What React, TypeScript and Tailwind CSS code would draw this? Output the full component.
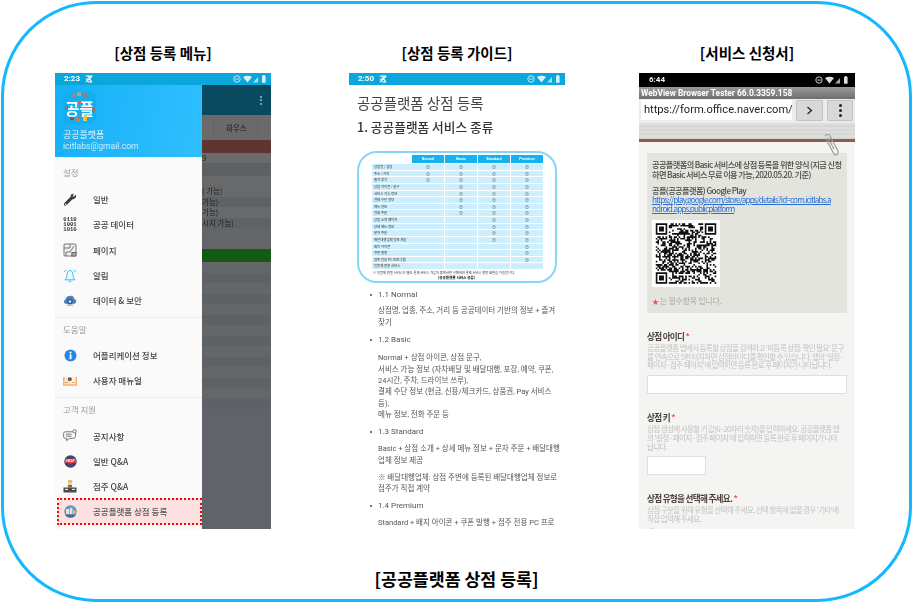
import React from "react";

const KR = "font-['Noto_Sans_CJK_KR','Noto_Sans',sans-serif]";
const RB = "font-['Roboto','Noto_Sans_CJK_KR',sans-serif]";

function StatusIcons({ color = "#fff" }: { color?: string }) {
  return (
    <svg width="36" height="10" viewBox="0 0 36 10" fill="none">
      <circle cx="5" cy="5" r="3.2" stroke={color} strokeWidth="0.9" />
      <rect x="3.2" y="4.6" width="3.6" height="0.9" fill={color} />
      <path d="M11 3 Q15.5 0.5 20 3 L15.5 8.5 Z" fill={color} />
      <path d="M21 8.5 L26 3 V8.5 Z" fill={color} opacity="0.75" />
      <rect x="30" y="1.8" width="3.6" height="7" rx="0.6" fill={color} />
      <rect x="31" y="1" width="1.6" height="1" fill={color} />
    </svg>
  );
}

function CrossIcon() {
  return (
    <svg width="8" height="8" viewBox="0 0 8 8" fill="none" stroke="#fff" strokeWidth="1.2">
      <path d="M0.8 1 H7.2 M7.2 1 L1 7 M3 1 L6.5 7 H3 M0.8 4 L3 4" />
    </svg>
  );
}

const WrenchIcon = () => (
  <svg width="14" height="14" viewBox="0 0 14 14">
    <path d="M13 1.6 L10.6 3.8 L9.6 3.2 L10.8 0.8 C9 0.4 7.4 1.6 7.6 3.8 L1.2 10.2 C0.2 11.4 1.4 13.4 3 12.6 L9.6 6.2 C11.8 6.6 13.6 4.2 13 1.6 Z" fill="#3c3c3c" />
    <circle cx="2.6" cy="11.2" r="0.8" fill="#fff" />
  </svg>
);
const BinaryIcon = () => (
  <div className="font-['Liberation_Mono',monospace] text-[5.6px] leading-[5.2px] font-bold text-[#333] text-center">
    0110<br />1001<br />1010
  </div>
);
const PageIcon = () => (
  <svg width="14" height="14" viewBox="0 0 14 14" fill="none" stroke="#666" strokeWidth="0.9">
    <rect x="1" y="1" width="12" height="12" rx="1" fill="#f2f2f2" />
    <path d="M1 5 H7 V1 M3 13 V9 H7 M7 9 L11 3 M9 13 V9.5 H13" />
    <rect x="9" y="9.5" width="4" height="3.5" fill="#aaa" />
  </svg>
);
const BellIcon = () => (
  <svg width="14" height="15" viewBox="0 0 14 15" fill="none" stroke="#2fc4f7" strokeWidth="1">
    <path d="M7 2.5 C4.5 2.5 4.2 5 4 7.5 C3.9 9.5 3 10.5 2 11.8 H12 C11 10.5 10.1 9.5 10 7.5 C9.8 5 9.5 2.5 7 2.5 Z" fill="#e8fbff" />
    <path d="M5.5 12.6 C6 14 8 14 8.5 12.6 M1.2 4 L3 1.8 M12.8 4 L11 1.8" />
  </svg>
);
const CloudIcon = () => (
  <svg width="15" height="13" viewBox="0 0 15 13">
    <path d="M3.4 10 C0.6 10 0 6 2.8 5.4 C3 2.8 5.4 1.2 7.6 1.8 C9.4 0.6 12 2.2 11.8 4.6 C14.8 5 15 10 12 10 Z" fill="#4a82c2" />
    <circle cx="7.5" cy="7.6" r="3.2" fill="#37608f" />
    <circle cx="7.5" cy="7.6" r="1.4" fill="#d6e2ee" />
    <path d="M4 11.5 H11" stroke="#7c9cc0" strokeWidth="1" />
  </svg>
);
const InfoIcon = () => (
  <svg width="13" height="13" viewBox="0 0 13 13">
    <circle cx="6.5" cy="6.5" r="6" fill="#2a86e4" />
    <rect x="5.6" y="5.4" width="1.9" height="4.8" fill="#fff" />
    <circle cx="6.5" cy="3.6" r="1.1" fill="#fff" />
  </svg>
);
const BookIcon = () => (
  <svg width="14" height="10" viewBox="0 0 14 10">
    <rect x="0.2" y="1" width="13.6" height="8.6" fill="#f3a050" />
    <path d="M1.4 0.8 H6.8 V8.4 H1.4 Z" fill="#fbe7c4" />
    <path d="M7.2 0.8 H12.6 V8.4 H7.2 Z" fill="#fff3dc" />
    <rect x="5" y="1.6" width="3.6" height="3.2" fill="#555" />
    <rect x="2" y="6" width="3" height="0.7" fill="#e27f46" />
    <rect x="9" y="6" width="3" height="0.7" fill="#e27f46" />
  </svg>
);
const ChatIcon = () => (
  <svg width="14" height="13" viewBox="0 0 14 13" fill="none" stroke="#666" strokeWidth="0.9">
    <path d="M2.2 2.8 H9.5 C12 2.8 12.6 4 12.6 6 C12.6 8.4 12 9.4 9.5 9.4 H6.4 L3.6 11.6 V9.4 H2.2 C0.8 9.4 0.6 8 0.6 6 C0.6 4 0.8 2.8 2.2 2.8 Z" fill="#fafafa" />
    <path d="M3 5.2 H8.5 M3 7.2 H8.5" />
    <circle cx="11.6" cy="2.4" r="1.7" fill="#fff" />
  </svg>
);
const HelpIcon = () => (
  <svg width="13" height="13" viewBox="0 0 13 13">
    <circle cx="6.5" cy="6.5" r="6.2" fill="#3a4870" />
    <path d="M1 3.8 H12 V8 H8 L6.5 9.8 L5 8 H1 Z" fill="#e23c46" />
    <text x="6.5" y="7.2" textAnchor="middle" fontSize="3.2" fontWeight="700" fill="#fff" fontFamily="Liberation Sans">HELP</text>
  </svg>
);
const OwnerIcon = () => (
  <svg width="14" height="14" viewBox="0 0 14 14">
    <rect x="0.5" y="8.5" width="13" height="5" fill="#4a4a4a" />
    <rect x="2" y="9.8" width="3" height="1.2" fill="#ddd" />
    <rect x="9" y="9.8" width="3" height="1.2" fill="#ddd" />
    <path d="M4.6 8.5 L5.2 5.8 H8.8 L9.4 8.5 Z" fill="#8a6a3c" />
    <circle cx="7" cy="3.6" r="2.1" fill="#eec9a0" />
    <path d="M4.6 3 C5 0.4 9 0.4 9.4 3 Z" fill="#e8b73a" />
    <rect x="6.5" y="5.8" width="1" height="2.7" fill="#c94c3a" />
  </svg>
);
const StoreIcon = () => (
  <svg width="13" height="13" viewBox="0 0 13 13">
    <circle cx="6.5" cy="6.5" r="6.2" fill="#5f97bf" />
    <rect x="2" y="4" width="3.4" height="5.4" fill="#e9e3d4" />
    <rect x="6" y="2.8" width="2.4" height="6.6" fill="#d8e8ef" />
    <rect x="9" y="5" width="2.2" height="4.4" fill="#e8b580" />
    <path d="M1.2 9.4 H11.8 C11 11.6 9 12.6 6.5 12.6 C4 12.6 2 11.6 1.2 9.4 Z" fill="#3f6f92" />
  </svg>
);

const LogoIcon = () => (
  <div className="relative w-[33px] h-[33px] rounded-[7px] bg-[#13aef2] flex items-center justify-center overflow-hidden">
    <span className={`${KR} text-[16px] leading-none font-bold text-white`}>공플</span>
    <svg className="absolute inset-0" width="33" height="33" viewBox="0 0 33 33">
      <rect x="9" y="2" width="4" height="4" fill="#9a8a7c" />
      <rect x="14" y="1" width="4" height="4" fill="#b0a090" />
      <rect x="20" y="3" width="4" height="3" fill="#a07a62" />
      <rect x="15" y="10" width="3" height="3" fill="#e8604a" />
      <rect x="2" y="15" width="3" height="4" fill="#8a7666" />
      <rect x="29" y="17" width="3" height="4" fill="#877d70" />
      <rect x="7" y="26" width="4" height="3" fill="#7d5c46" />
      <rect x="13" y="27" width="4" height="4" fill="#c08058" />
      <rect x="20" y="25" width="4" height="5" fill="#f1c53e" />
      <rect x="16" y="22" width="3" height="3" fill="#888" />
    </svg>
  </div>
);

const sections = [
  {
    label: "설정",
    items: [
      { icon: <WrenchIcon />, text: "일반" },
      { icon: <BinaryIcon />, text: "공공 데이터" },
      { icon: <PageIcon />, text: "페이지" },
      { icon: <BellIcon />, text: "알림" },
      { icon: <CloudIcon />, text: "데이터 & 보안" },
    ],
  },
  {
    label: "도움말",
    items: [
      { icon: <InfoIcon />, text: "어플리케이션 정보" },
      { icon: <BookIcon />, text: "사용자 매뉴얼" },
    ],
  },
  {
    label: "고객 지원",
    items: [
      { icon: <ChatIcon />, text: "공지사항" },
      { icon: <HelpIcon />, text: "일반 Q&A" },
      { icon: <OwnerIcon />, text: "점주 Q&A" },
    ],
  },
];

function MenuRow({ icon, text }: { icon: React.ReactNode; text: string }) {
  return (
    <div className="h-[25.2px] flex items-center">
      <div className="w-[38px] pl-[8px] shrink-0">
        <div className="w-[14px] flex justify-center">{icon}</div>
      </div>
      <span className="text-[8.5px] text-[#444] font-medium whitespace-nowrap">{text}</span>
    </div>
  );
}

const dimRows = ["#64676a", "#5e6266", "#64676a", "#5c6266", "#64676a", "#5e6266", "#64676a", "#5c6266"];

function MenuPanel() {
  return (
    <div className={`${KR} w-[216px] h-[456px] flex flex-col overflow-hidden blur-[0.4px]`}>
      <div className="h-[12px] bg-[#0ba6dc] flex items-center justify-between pl-[9px] pr-[3px] shrink-0">
        <div className="flex items-center gap-[5px]">
          <span className="font-['Roboto',sans-serif] text-[8px] font-bold text-white">2:23</span>
          <CrossIcon />
        </div>
        <StatusIcons color="#d8f2fb" />
      </div>
      <div className="flex flex-1 min-h-0">
        <div className="w-[147px] bg-[#fafafa] flex flex-col shrink-0">
          <div className="h-[72px] bg-[linear-gradient(100deg,#16b0f6,#2fbfff)] pl-[8px] pt-[6px] shrink-0">
            <LogoIcon />
            <div className="mt-[5px] text-[9px] leading-[11px] text-[#e5f6ff]">공공플랫폼</div>
            <div className="font-['Roboto',sans-serif] mt-[1px] text-[8.6px] leading-[11px] text-[#c9edff] whitespace-nowrap">icitlabs@gmail.com</div>
          </div>
          {sections.map((s, i) => (
            <div key={s.label} className={i > 0 ? "border-t-[1px] border-[#ececec]" : ""}>
              <div className={`${i === 0 ? "h-[30px] pt-[10px]" : "h-[25px] pt-[6px]"} pl-[8px] text-[8.5px] text-[#999] leading-[11px]`}>{s.label}</div>
              {s.items.map((it) => (
                <MenuRow key={it.text} icon={it.icon} text={it.text} />
              ))}
              {i < 2 && <div className="h-[4px]" />}
            </div>
          ))}
          <div className="ml-[2px] mt-[-1px] h-[27px] border-[2px] border-dotted border-[#f00] bg-[#fde0e0] flex items-center">
            <div className="w-[34px] pl-[4px] shrink-0">
              <div className="w-[14px] flex justify-center"><StoreIcon /></div>
            </div>
            <span className="text-[8.5px] text-[#555] font-medium whitespace-nowrap">공공플랫폼 상점 등록</span>
          </div>
        </div>
        <div className="flex-1 bg-[#606367] flex flex-col overflow-hidden text-[#222] text-[7.5px]">
          <div className="h-[30px] bg-[#0a4a61] flex items-center justify-end pr-[9px] shrink-0">
            <div className="flex flex-col gap-[1.5px]">
              <i className="block w-[2px] h-[2px] bg-[#7f9aa6]" />
              <i className="block w-[2px] h-[2px] bg-[#7f9aa6]" />
              <i className="block w-[2px] h-[2px] bg-[#7f9aa6]" />
            </div>
          </div>
          <div className="h-[25px] bg-[#6a6a6a] flex items-center shrink-0">
            <i className="block w-[1px] h-[12px] bg-[#4f6775] ml-[11px]" />
            <span className="ml-[12px] font-bold text-[#333]">하우스</span>
            <i className="block w-[1px] h-[12px] bg-[#4f6775] ml-[10px]" />
          </div>
          <div className="h-[13px] bg-[#5f3534] shrink-0" />
          <div className="h-[10px] bg-[#6a6a6a] leading-[10px] shrink-0">9</div>
          <div className="h-[13px] bg-[#5d6165] shrink-0" />
          <div className="h-[10px] bg-[#68696b] shrink-0" />
          {["( 가능)", "가능)", "가능)", "시지 가능)"].map((t, i) => (
            <div key={i} className={`h-[10.5px] leading-[10.5px] whitespace-nowrap shrink-0 ${i % 2 ? "bg-[#5e6266]" : "bg-[#68696b]"}`}>{t}</div>
          ))}
          <div className="h-[21px] bg-[#636569] shrink-0" />
          <div className="h-[13px] bg-[#145a16] shrink-0" />
          {Array.from({ length: 14 }).map((_, i) => (
            <div key={i} className="h-[10.5px] shrink-0" style={{ background: dimRows[i % dimRows.length] }} />
          ))}
        </div>
      </div>
    </div>
  );
}

const features = [
  "상점명 / 업종", "주소 / 거리", "즐겨 찾기", "상점 아이콘 / 문구", "서비스 가능 정보", "결제 수단 정보", "메뉴 정보", "전화 주문",
  "상점 소개 페이지", "상세 메뉴 정보", "문자 주문", "배달대행업체 정보 제공", "배지 아이콘", "쿠폰 발행", "점주 전용 PC 프로그램", "인증제 연동 서비스",
];
const tiers = [
  { name: "Normal", n: 3 },
  { name: "Basic", n: 8 },
  { name: "Standard", n: 12 },
  { name: "Premium", n: 15 },
];

function ServiceChart() {
  return (
    <div className="w-[200px] h-[132px] border-[2px] border-[#86d6fa] rounded-[20px] overflow-hidden pl-[13px] pt-[2px] bg-white">
      <div className="flex h-[8px]">
        <div className="w-[40px]" />
        {tiers.map((t) => (
          <div key={t.name} className="w-[32px] mr-[1px] bg-[#16b1ee] text-white text-[3.6px] font-bold text-center leading-[8px] font-['Liberation_Sans',sans-serif]">{t.name}</div>
        ))}
      </div>
      {features.map((f, i) => (
        <div key={f} className="flex h-[6.63px] leading-[6px] border-t-[0.5px] border-white">
          <div className="w-[40px] bg-[#cdeefd] text-[3.4px] text-[#333] pl-[2px] whitespace-nowrap overflow-hidden">{f}</div>
          {tiers.map((t) => (
            <div key={t.name} className="w-[32px] mr-[1px] bg-[#cdeefd] text-[#555] text-[4px] text-center leading-[6px]">{i < t.n ? "⊕" : ""}</div>
          ))}
        </div>
      ))}
      <div className="text-[3.3px] text-[#333] mt-[1px] leading-[5px] whitespace-nowrap pl-[1px]">※ 인증제 연동 서비스는 별도 결제 서비스 가입자 중에서만 구매해야 결제 서비스 연동 화면을 이용합니다.</div>
      <div className="text-[3.6px] text-[#111] font-bold text-center leading-[5px] pr-[14px]">[공공플랫폼 서비스 종류]</div>
    </div>
  );
}

function Bullet({ children }: { children: React.ReactNode }) {
  return (
    <div className={`${RB} flex items-center h-[12px] text-[8px] text-[#555]`}>
      <i className="block w-[2px] h-[2px] rounded-full bg-[#444] ml-[21px] mr-[6px]" />
      <span className="whitespace-nowrap">{children}</span>
    </div>
  );
}
function Para({ children, cls = "" }: { children: React.ReactNode; cls?: string }) {
  return <p className={`${RB} pl-[29px] text-[7.5px] text-[#555] whitespace-nowrap ${cls}`}>{children}</p>;
}

function GuidePanel() {
  return (
    <div className={`${KR} w-[216px] h-[456px] bg-white overflow-hidden blur-[0.4px]`}>
      <div className="h-[12px] bg-[#0ba6dc] flex items-center justify-between pl-[9px] pr-[3px]">
        <div className="flex items-center gap-[5px]">
          <span className="font-['Roboto',sans-serif] text-[8px] font-bold text-white">2:50</span>
          <CrossIcon />
        </div>
        <StatusIcons color="#d8f2fb" />
      </div>
      <div className="pl-[8px] pt-[8px]">
        <h1 className="text-[14.5px] leading-[20px] text-[#444] whitespace-nowrap">공공플랫폼 상점 등록</h1>
        <h2 className="mt-[5px] text-[12.7px] leading-[18px] text-[#333] font-medium whitespace-nowrap">1. 공공플랫폼 서비스 종류</h2>
        <div className="mt-[15px]"><ServiceChart /></div>
      </div>
      <div className="mt-[6px]">
        <Bullet>1.1 Normal</Bullet>
        <Para cls="mt-[4px] leading-[11.7px]">상점명, 업종, 주소, 거리 등 공공데이터 기반의 정보 + 즐겨<br />찾기</Para>
        <div className="mt-[6px]"><Bullet>1.2 Basic</Bullet></div>
        <Para cls="mt-[6px] leading-[11.3px]">Normal + 상점 아이콘, 상점 문구,<br />서비스 가능 정보 (자차배달 및 배달대행, 포장, 예약, 쿠폰,<br />24시간, 주차, 드라이브 쓰루),<br />결제 수단 정보 (현금, 신용/체크카드, 상품권, Pay 서비스<br />등),<br />메뉴 정보, 전화 주문 등</Para>
        <div className="mt-[6px]"><Bullet>1.3 Standard</Bullet></div>
        <Para cls="mt-[5px] leading-[11.7px]">Basic + 상점 소개 + 상세 메뉴 정보 + 문자 주문 + 배달대행<br />업체 정보 제공</Para>
        <Para cls="mt-[5px] leading-[11.7px]">※ 배달대행업체: 상점 주변에 등록된 배달대행업체 정보로<br />점주가 직접 계약</Para>
        <div className="mt-[5px]"><Bullet>1.4 Premium</Bullet></div>
        <Para cls="mt-[5px] leading-[11.7px]">Standard + 배지 아이콘 + 쿠폰 발행 + 점주 전용 PC 프로</Para>
      </div>
    </div>
  );
}

function QrCode() {
  const n = 37;
  let seed = 12345;
  const cells: string[] = [];
  const inFinder = (x: number, y: number) =>
    (x < 8 && y < 8) || (x >= n - 8 && y < 8) || (x < 8 && y >= n - 8);
  for (let y = 0; y < n; y++) {
    for (let x = 0; x < n; x++) {
      seed = (seed * 1103515245 + 12345) & 0x7fffffff;
      if (!inFinder(x, y) && (seed >> 16) % 100 < 50) cells.push(`M${x} ${y}h1v1h-1z`);
    }
  }
  const finder = (x: number, y: number) =>
    `M${x} ${y}h7v7h-7zM${x + 1} ${y + 1}v5h5v-5zM${x + 2} ${y + 2}h3v3h-3z`;
  return (
    <svg width="68" height="67" viewBox="-2 -2 41 41" className="bg-white">
      <path d={cells.join("")} fill="#111" />
      <path d={finder(0, 0) + finder(n - 7, 0) + finder(0, n - 7)} fill="#111" fillRule="evenodd" />
    </svg>
  );
}

function FormField({ title, lines, inputW }: { title: string; lines: React.ReactNode; inputW?: string }) {
  return (
    <div>
      <div className="text-[8.6px] leading-[12px] font-bold text-[#4a3f3a] tracking-[-0.7px] whitespace-nowrap">
        {title} <span className="text-[#e8525a]">*</span>
      </div>
      <div className="mt-[2px] text-[7.5px] leading-[8.7px] text-[#c2c2c2] tracking-[-0.6px] whitespace-nowrap">{lines}</div>
      {inputW && <div className={`${inputW} mt-[5px] h-[19px] bg-white border-[1px] border-[#dedede]`} />}
    </div>
  );
}

function FormPanel() {
  return (
    <div className={`${KR} relative w-[216px] h-[456px] bg-[#f4f4f3] overflow-hidden flex flex-col blur-[0.4px]`}>
      <div className="h-[14px] bg-black flex items-center justify-between pl-[10px] pr-[5px] shrink-0">
        <span className="font-['Roboto',sans-serif] text-[8px] font-bold text-[#eee]">6:44</span>
        <StatusIcons color="#ddd" />
      </div>
      <div className="h-[12px] bg-[linear-gradient(#9a9a9a,#6e6e6e)] pl-[2px] font-['Roboto',sans-serif] text-[8.4px] leading-[12px] font-bold text-white whitespace-nowrap shrink-0">
        WebView Browser Tester 66.0.3359.158
      </div>
      <div className="h-[24px] bg-[#ececec] flex items-start pt-[1px] pl-[2px] shrink-0">
        <div className="w-[151px] h-[20px] bg-white font-['Roboto',sans-serif] text-[11.1px] leading-[20px] text-[#222] pl-[3px] whitespace-nowrap">https://form.office.naver.com/</div>
        <div className="ml-[4px] w-[27px] h-[21px] bg-[#d8d8d8] border-[1px] border-[#c4c4c4] rounded-[1px] flex items-center justify-center">
          <svg width="7" height="9" viewBox="0 0 7 9" fill="none" stroke="#222" strokeWidth="1.3"><path d="M1.5 1 L5.5 4.5 L1.5 8" /></svg>
        </div>
        <div className="ml-[4px] w-[26px] h-[21px] bg-[#d8d8d8] border-[1px] border-[#c4c4c4] rounded-[1px] flex flex-col items-center justify-center gap-[2px]">
          <i className="block w-[3px] h-[3px] rounded-full bg-[#222]" />
          <i className="block w-[3px] h-[3px] rounded-full bg-[#222]" />
          <i className="block w-[3px] h-[3px] rounded-full bg-[#222]" />
        </div>
      </div>
      <div className="h-[16px] bg-[repeating-linear-gradient(#dededc_0,#dededc_2px,#d7d7d5_2px,#d7d7d5_4px)] shrink-0" />
      <div className="h-[3px] bg-[#8c5e48] shrink-0" />
      <div className="mx-[8px] mt-[11px] h-[160px] bg-[#e4e4df] pt-[6px] px-[5px] shrink-0">
        <p className="text-[8.2px] leading-[10px] font-medium text-[#4a4a44] tracking-[-0.6px] whitespace-nowrap">
          공공플랫폼의 Basic 서비스에 상점 등록을 위한 양식 (지금 신청<br />하면 Basic 서비스 무료 이용 가능, 2020.05.20. 기준)
        </p>
        <p className="mt-[7px] text-[8.2px] leading-[9px] font-medium text-[#4a4a44] tracking-[-0.6px] whitespace-nowrap">공플(공공플랫폼) Google Play</p>
        <p className="text-[8.2px] leading-[9.2px] text-[#2a6fd6] underline tracking-[-0.9px] whitespace-nowrap">
          https://play.google.com/store/apps/details?id=com.icitlabs.a<br />ndroid.apps.publicplatform
        </p>
        <div className="mt-[7px] h-[67px]"><QrCode /></div>
        <div className="mt-[8px] flex items-end gap-[1px]">
          <span className="text-[#e8525a] text-[7px] leading-[9px]">★</span>
          <span className="text-[8px] leading-[11px] text-[#a9a9a4] tracking-[-0.3px]">는 필수항목 입니다.</span>
        </div>
      </div>
      <div className="px-[8px] mt-[17px] flex flex-col gap-[17px]">
        <FormField
          title="상점 아이디"
          inputW="w-[200px]"
          lines={<>공공플랫폼 앱에서 등록할 상점을 검색하고 '미등록 상점: 확인 필요' 문구<br />를 연속으로 5번 터치하면 상점아이디를 확인할 수 있습니다. 앱의 '설정 -<br />페이지 - 점주 페이지'에 입력하면 등록 완료 후 페이지가 나타납니다.</>}
        />
        <FormField
          title="상점 키"
          inputW="w-[59px]"
          lines={<>상점 생성에 사용할 키 값(6~20자리 숫자)을 입력하세요. 공공플랫폼 앱<br />의 '설정 - 페이지 - 점주 페이지'에 입력하면 등록 완료 후 페이지가 나타<br />납니다.</>}
        />
        <FormField
          title="상점 유형을 선택해 주세요."
          lines={<>상점 구분을 위해 유형을 선택해 주세요. 선택 항목에 없을 경우 '기타'에<br />직접 입력해 주세요.<div className="mt-[4px] w-[9px] h-[9px] rounded-full border-[1px] border-[#ccc] bg-white" /></>}
        />
      </div>
      <svg className="absolute left-[183px] top-[60px]" width="18" height="24" viewBox="0 0 18 24" fill="none" stroke="#9a9a9a" strokeWidth="1.2">
        <path d="M3 3 C4 1 7 1 8 3 L16 18 C17 21 14 23 12 21 L5 8 C4 6 6 5 7 7 L12 16" />
      </svg>
    </div>
  );
}

function Title({ children, cls = "" }: { children: React.ReactNode; cls?: string }) {
  return <div className={`${KR} font-bold text-black text-center whitespace-nowrap ${cls}`}>{children}</div>;
}

export default function App() {
  return (
    <div className="w-[913px] h-[603px] bg-white p-[1px] overflow-hidden">
      <div className="w-[911px] h-[601px] border-[3px] border-[#14b8ff] rounded-[95px] flex flex-col pt-[39px]">
        <div className="flex pl-[51px] gap-[78px]">
          <div className="w-[216px] flex flex-col">
            <Title cls="h-[20px] leading-[20px] text-[14.5px] mb-[10px]">[상점 등록 메뉴]</Title>
            <MenuPanel />
          </div>
          <div className="w-[216px] flex flex-col">
            <Title cls="h-[20px] leading-[20px] text-[14.5px] mb-[10px]">[상점 등록 가이드]</Title>
            <GuidePanel />
          </div>
          <div className="w-[216px] flex flex-col -ml-[4px]">
            <Title cls="h-[20px] leading-[20px] text-[14.5px] mb-[10px]">[서비스 신청서]</Title>
            <FormPanel />
          </div>
        </div>
        <Title cls="mt-[39px] h-[22px] leading-[22px] text-[17.3px]">[공공플랫폼 상점 등록]</Title>
      </div>
    </div>
  );
}
